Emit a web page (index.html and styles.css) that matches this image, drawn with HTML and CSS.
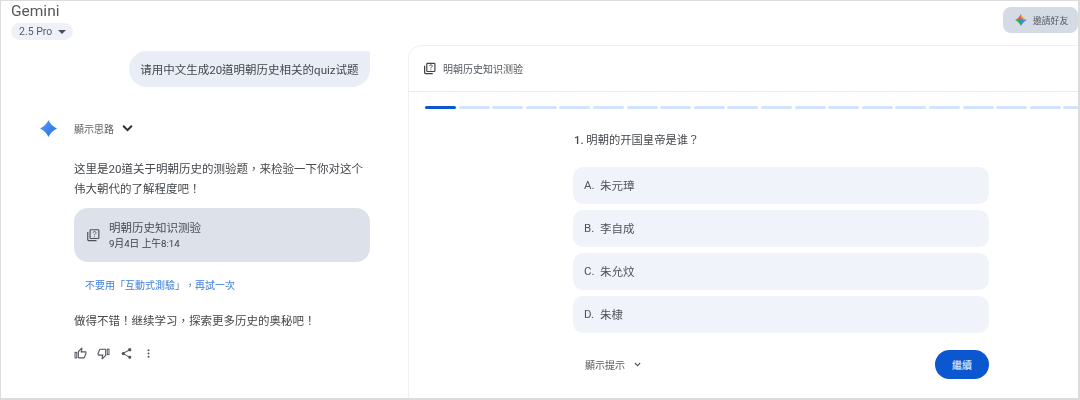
FILE: index.html
```html
<!DOCTYPE html>
<html lang="zh-Hant">
<head>
<meta charset="utf-8">
<title>Gemini</title>
<link rel="stylesheet" href="styles.css">
</head>
<body>
<div class="frame">
  <main class="chat">
    <div class="brand">Gemini</div>
    <button class="model">2.5 Pro <span class="caret"></span></button>
    <div class="user-row"><div class="bubble">请用中文生成20道明朝历史相关的quiz试题</div></div>
    <div class="thinking">
      <svg class="spark" viewBox="0 0 24 24"><defs><linearGradient id="g" x1="0" y1="0" x2="1" y2="1"><stop offset="0" stop-color="#5b9bf5"/><stop offset="1" stop-color="#1f6fe8"/></linearGradient></defs><path fill="url(#g)" d="M12 0C14 4.500 19 10 24 12C19 14 14 19.500 12 24C10 19.500 5 14 0 12C5 10 10 4.500 12 0z"/></svg>
      <span class="thinking-label">顯示思路</span>
      <svg class="chev" viewBox="0 0 24 24"><path d="M4 7l8 8 8-8" fill="none" stroke="#2b3138" stroke-width="3.800"/></svg>
    </div>
    <div class="answer">
      <p class="para">这里是20道关于明朝历史的测验题，来检验一下你对这个伟大朝代的了解程度吧！</p>
      <div class="card">
        <svg class="quiz-icon" viewBox="0 0 24 24"><g fill="none" stroke="#4c5157" stroke-width="2"><rect x="7" y="3" width="15" height="15" rx="1.500"/><path d="M3 7v13a1.500 1.500 0 0 0 1.500 1.500H18"/><path d="M12.200 8.200a2.400 2.400 0 1 1 3.500 2.200c-.8.5-1.200.9-1.200 2" stroke-width="1.500"/></g><circle cx="14.500" cy="15" r="1" fill="#4c5157"/></svg>
        <div class="card-text">
          <div class="card-title">明朝历史知识测验</div>
          <div class="card-date">9月4日 上午8:14</div>
        </div>
      </div>
      <a class="retry">不要用「互動式測驗」，再試一次</a>
      <p class="para closing">做得不错！继续学习，探索更多历史的奥秘吧！</p>
      <div class="actions">
        <svg class="act" viewBox="0 0 24 24"><path fill="#50565d" d="M9 21h9c.83 0 1.540-.5 1.840-1.220l3.020-7.050c.09-.23.14-.47.14-.73v-2c0-1.100-.9-2-2-2h-6.310l.95-4.570.03-.32c0-.41-.17-.79-.44-1.060L14.170 1 7.580 7.590C7.220 7.950 7 8.450 7 9v10c0 1.100.9 2 2 2zM9 9l4.340-4.340L12 10h9v2l-3 7H9V9z"/><rect x="1.900" y="9.900" width="3.200" height="10.200" fill="none" stroke="#50565d" stroke-width="1.800"/></svg>
        <svg class="act" viewBox="0 0 24 24"><path fill="#50565d" d="M15 3H6c-.83 0-1.540.5-1.840 1.220l-3.020 7.050c-.09.23-.14.47-.14.730v2c0 1.100.9 2 2 2h6.310l-.95 4.570-.03.32c0 .41.17.79.44 1.060L9.830 23l6.590-6.590c.36-.36.580-.86.580-1.410V5c0-1.100-.9-2-2-2zm0 12l-4.340 4.340L12 14H3v-2l3-7h9v10z"/><rect x="18.900" y="3.900" width="3.200" height="10.200" fill="none" stroke="#50565d" stroke-width="1.800"/></svg>
        <svg class="act" viewBox="0 0 24 24"><path fill="#50565d" d="M18 16.080c-.76 0-1.440.3-1.960.77L8.910 12.700c.05-.23.09-.46.09-.7s-.04-.47-.09-.7l7.050-4.110c.54.5 1.250.81 2.040.81 1.660 0 3-1.340 3-3s-1.340-3-3-3-3 1.340-3 3c0 .24.04.47.09.7L8.040 9.810C7.500 9.310 6.790 9 6 9c-1.660 0-3 1.340-3 3s1.340 3 3 3c.79 0 1.500-.31 2.040-.81l7.120 4.160c-.05.21-.08.43-.08.650 0 1.610 1.310 2.920 2.920 2.920 1.610 0 2.920-1.310 2.920-2.920s-1.310-2.920-2.920-2.920z"/></svg>
        <svg class="act-more" viewBox="0 0 24 24"><g fill="#50565d"><circle cx="12" cy="5" r="2.200"/><circle cx="12" cy="12" r="2.200"/><circle cx="12" cy="19" r="2.200"/></g></svg>
      </div>
    </div>
  </main>
  <section class="side">
    <div class="topbar">
      <button class="invite">
        <svg class="tint" viewBox="0 0 24 24"><defs><clipPath id="st"><path d="M12 0C14 4.500 19 10 24 12C19 14 14 19.500 12 24C10 19.500 5 14 0 12C5 10 10 4.500 12 0z"/></clipPath></defs><g clip-path="url(#st)"><rect width="12" height="12" fill="#ea5a47"/><rect x="12" width="12" height="12" fill="#f4b400"/><rect y="12" width="12" height="12" fill="#34a853"/><rect x="12" y="12" width="12" height="12" fill="#4285f4"/><circle cx="13" cy="12" r="3.500" fill="#4285f4"/></g></svg>
        邀請好友
      </button>
    </div>
    <div class="panel">
      <header class="panel-head">
        <svg class="panel-icon" viewBox="0 0 24 24"><g fill="none" stroke="#3d4248" stroke-width="2.200"><rect x="7" y="2.500" width="15" height="15" rx="1.500"/><path d="M3 7v13a1.500 1.500 0 0 0 1.500 1.500H18"/><path d="M12.200 7.500a2.400 2.400 0 1 1 3.500 2.200c-.8.5-1.200.9-1.200 2" stroke-width="1.700"/></g><circle cx="14.500" cy="14.300" r="1.100" fill="#3d4248"/></svg>
        <span>明朝历史知识测验</span>
      </header>
      <div class="progress">
        <i class="seg on"></i><i class="seg"></i><i class="seg"></i><i class="seg"></i><i class="seg"></i><i class="seg"></i><i class="seg"></i><i class="seg"></i><i class="seg"></i><i class="seg"></i><i class="seg"></i><i class="seg"></i><i class="seg"></i><i class="seg"></i><i class="seg"></i><i class="seg"></i><i class="seg"></i><i class="seg"></i><i class="seg"></i><i class="seg"></i>
      </div>
      <div class="quiz">
        <div class="question"><b>1.</b> 明朝的开国皇帝是谁？</div>
        <div class="options">
          <div class="option"><span class="letter">A.</span>朱元璋</div>
          <div class="option"><span class="letter">B.</span>李自成</div>
          <div class="option"><span class="letter">C.</span>朱允炆</div>
          <div class="option"><span class="letter">D.</span>朱棣</div>
        </div>
        <div class="quiz-foot">
          <span class="hint">顯示提示 <svg class="hint-chev" viewBox="0 0 24 24"><path d="M5 8l7 7 7-7" fill="none" stroke="#50565d" stroke-width="3"/></svg></span>
          <button class="next">繼續</button>
        </div>
      </div>
    </div>
  </section>
</div>
</body>
</html>
```

FILE: styles.css
```css
* { box-sizing: border-box; }
html, body { margin: 0; padding: 0; background: #fff; }
body {
  font-family: Roboto, "Noto Sans CJK TC", sans-serif;
  color: #44474b;
  overflow: hidden;
  text-spacing-trim: space-all;
}
button { font-family: inherit; border: 0; padding: 0; }
p { margin: 0; }

.frame {
  width: 1080px;
  height: 400px;
  border: 1px solid #dcdcdc;
  border-width: 1px 2px 2px 1px;
  display: flex;
  overflow: hidden;
  filter: blur(0.35px);
}

.chat { width: 407px; flex: none; padding: 0 0 0 10px; }
.brand { font-size: 15.500px; line-height: 18px; margin-top: 1px; color: #55585c; }
.model {
  display: flex;
  align-items: center;
  gap: 6px;
  height: 17px;
  margin-top: 3px;
  padding: 0 7px 0 8px;
  border-radius: 9px;
  background: #eef1f7;
  color: #5b5f64;
  font-size: 10.500px;
}
.caret { width: 0; height: 0; border: 4px solid transparent; border-top: 4px solid #4c5056; border-bottom: 0; }

.user-row { display: flex; justify-content: flex-end; padding-right: 38px; margin-top: 11px; }
.bubble {
  height: 36px;
  padding: 0 11.500px;
  display: flex;
  align-items: center;
  border-radius: 18px 2px 18px 18px;
  background: #e8edf6;
  font-size: 11.500px;
  color: #44474b;
}

.thinking { display: flex; align-items: center; height: 20px; margin-top: 31px; padding-left: 29px; }
.spark { width: 17px; height: 17px; flex: none; }
.thinking-label { font-size: 10px; color: #5d6166; margin-left: 17px; }
.chev { width: 13px; height: 13px; margin-left: 7px; }

.answer { padding: 0 38px 0 63px; margin-top: 21px; }
.para { font-size: 11.500px; line-height: 20px; color: #44474b; }

.card {
  display: flex;
  align-items: center;
  gap: 9px;
  height: 54px;
  margin-top: 9px;
  padding-left: 12px;
  border-radius: 14px;
  background: #dde2ea;
}
.quiz-icon { width: 14px; height: 14px; flex: none; }
.card-text { margin-top: 1px; }
.card-title { font-size: 11.500px; line-height: 16px; color: #4a4e53; }
.card-date { font-size: 9.700px; line-height: 14px; margin-top: 1px; color: #3d4146; }

.retry { display: block; margin: 17px 0 0 11px; font-size: 10px; line-height: 14px; color: #3f7fd8; }
.closing { margin-top: 18px; }

.actions { display: flex; align-items: center; gap: 10px; margin-top: 16px; }
.act { width: 13px; height: 13px; flex: none; }
.act-more { width: 11px; height: 11px; flex: none; }

.side { flex: 1; min-width: 0; display: flex; flex-direction: column; }
.topbar { height: 44px; display: flex; justify-content: flex-end; padding: 6px 0 0; }
.invite {
  display: flex;
  align-items: center;
  gap: 6px;
  width: 75px;
  height: 26px;
  padding-left: 12px;
  border-radius: 8px;
  background: #d4dbe5;
  color: #55595e;
  font-size: 8.800px;
}
.tint { width: 12px; height: 12px; flex: none; }

.panel {
  flex: 1;
  min-height: 0;
  border: 1px solid #f0f0f0;
  border-width: 1px 0 0 1px;
  border-top-left-radius: 14px;
  overflow: hidden;
}
.panel-head {
  height: 46px;
  display: flex;
  align-items: center;
  gap: 7px;
  padding-left: 14px;
  border-bottom: 1px solid #ececec;
  font-size: 10px;
  color: #55595e;
}
.panel-icon { width: 13px; height: 13px; flex: none; }

.progress { display: flex; gap: 2.600px; margin: 14px 0 0 16px; width: 700px; }
.seg { width: 31px; height: 3px; flex: none; border-radius: 2px; background: #d3e3fd; }
.seg.on { background: #0b57d0; }

.quiz { width: 416px; margin: 24px 0 0 164px; }
.question { font-size: 11.300px; line-height: 16px; color: #44474b; padding-left: 1px; }
.question b { font-weight: 500; }
.options { display: flex; flex-direction: column; gap: 6px; margin-top: 18px; }
.option {
  height: 37px;
  display: flex;
  align-items: center;
  padding: 0 0 2px 11px;
  border-radius: 10px;
  background: #f0f3f9;
  font-size: 11.500px;
  color: #50545a;
}
.letter { width: 16px; }
.quiz-foot { display: flex; align-items: center; justify-content: space-between; margin-top: 17px; padding-left: 12px; }
.hint { display: flex; align-items: center; gap: 8px; font-size: 10px; color: #55595e; }
.hint-chev { width: 9px; height: 9px; }
.next {
  width: 54px;
  height: 29px;
  border-radius: 15px;
  background: #0b57d0;
  color: #fff;
  font-size: 10px;
}
```
